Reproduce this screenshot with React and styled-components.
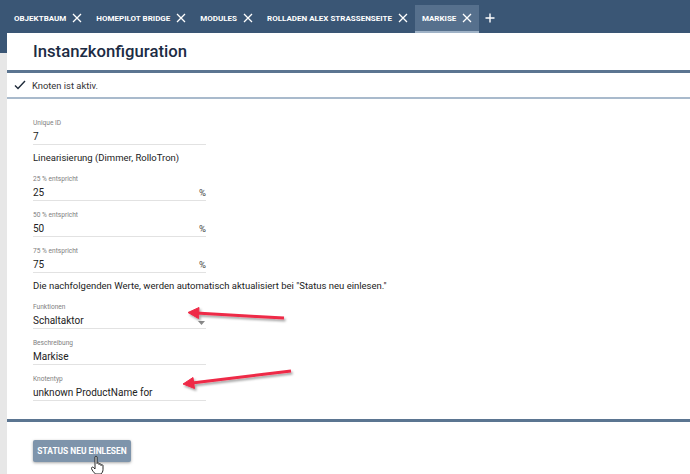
import React from 'react';
import styled, { createGlobalStyle } from 'styled-components';

const GlobalStyle = createGlobalStyle`
  html, body {
    margin: 0;
    padding: 0;
    background: #e7e7e7;
    font-family: Roboto, "Liberation Sans", Arial, sans-serif;
  }
  #root {
    position: relative;
    min-height: 474px;
  }
`;

const tabs = ['Objektbaum', 'Homepilot Bridge', 'Modules', 'Rolladen Alex Strassenseite', 'Markise'];

const CloseIcon = () => (
  <svg width="10" height="10" viewBox="0 0 10 10">
    <path d="M1 1 L9 9 M9 1 L1 9" stroke="#fff" strokeWidth="1.3" fill="none" />
  </svg>
);

const PlusIcon = () => (
  <svg width="10" height="10" viewBox="0 0 10 10">
    <path d="M5 0.5 V9.5 M0.5 5 H9.5" stroke="#fff" strokeWidth="1.4" fill="none" />
  </svg>
);

const CheckIcon = () => (
  <svg width="12" height="10" viewBox="0 0 12 10">
    <path d="M1 5.5 L4 8.5 L11 1" stroke="#1f2b3a" strokeWidth="1.4" fill="none" />
  </svg>
);

const Caret = () => (
  <svg width="7" height="4" viewBox="0 0 7 4">
    <path d="M0 0 H7 L3.5 4 Z" fill="#888" />
  </svg>
);

export default function App() {
  return (
    <>
      <GlobalStyle />
      <Header>
        <TabBar>
          {tabs.map((t, i) => (
            <Tab key={t} active={i === tabs.length - 1}>
              <span>{t}</span>
              <CloseIcon />
            </Tab>
          ))}
          <AddTab>
            <PlusIcon />
          </AddTab>
        </TabBar>
      </Header>
      <Panel>
        <Title>Instanzkonfiguration</Title>
        <Status>
          <CheckIcon />
          <span>Knoten ist aktiv.</span>
        </Status>
        <Form>
          <Field>
            <Label>Unique ID</Label>
            <Value>7</Value>
          </Field>
          <Heading>Linearisierung (Dimmer, RolloTron)</Heading>
          {['25', '50', '75'].map((v) => (
            <Field key={v}>
              <Label>{v} % entspricht</Label>
              <Value>
                <span>{v}</span>
                <Unit>%</Unit>
              </Value>
            </Field>
          ))}
          <Heading>Die nachfolgenden Werte, werden automatisch aktualisiert bei "Status neu einlesen."</Heading>
          <Field>
            <Label>Funktionen</Label>
            <Value>
              <span>Schaltaktor</span>
              <CaretBox>
                <Caret />
              </CaretBox>
            </Value>
          </Field>
          <Field>
            <Label>Beschreibung</Label>
            <Value>Markise</Value>
          </Field>
          <Field>
            <Label>Knotentyp</Label>
            <Value>unknown ProductName for</Value>
          </Field>
        </Form>
        <Footer>
          <Button>Status neu einlesen</Button>
        </Footer>
      </Panel>
      <Overlay width="690" height="474" viewBox="0 0 690 474">
        <defs>
          <filter id="sh" x="-20%" y="-200%" width="140%" height="500%">
            <feDropShadow dx="1.5" dy="2" stdDeviation="1.2" floodColor="#000" floodOpacity="0.35" />
          </filter>
        </defs>
        <g filter="url(#sh)" fill="#ee2a47" stroke="#ee2a47">
          <line x1="284" y1="318" x2="196" y2="313" strokeWidth="3" />
          <path d="M188 312.5 L199 307.5 L198.5 318.5 Z" strokeWidth="1" />
          <line x1="291" y1="371" x2="192" y2="383" strokeWidth="3" />
          <path d="M183 384 L193 377.5 L194.5 388.5 Z" strokeWidth="1" />
        </g>
        <g transform="translate(91 455.5)">
          <path
            d="M4 1.5 C4 0.5 6 0.5 6 1.5 V8 C6 7 8 7 8 8 V9 C8 8 10 8 10 9 V10 C10 9 12 9 12 10 V14 C12 16 11 17.5 10 18.5 H4.5 C3.5 17.5 1 15 0.5 13 C0 12 1.5 11 2.5 12 L4 13.5 Z"
            fill="#fff"
            stroke="#111"
            strokeWidth="0.9"
          />
        </g>
      </Overlay>
    </>
  );
}

const Header = styled.div`
  background: #3a5675;
  height: 53px;
`;

const TabBar = styled.div`
  display: flex;
  align-items: stretch;
  height: 33px;
  padding: 5px 0 0 7px;
  box-sizing: border-box;
`;

const Tab = styled.div`
  display: flex;
  align-items: center;
  gap: 6px;
  padding: 0 7px;
  color: #fff;
  font-size: 8px;
  font-weight: 700;
  text-transform: uppercase;
  background: ${(p) => (p.active ? '#56708d' : 'transparent')};
  border-bottom: 2px solid ${(p) => (p.active ? '#9fb2c6' : 'transparent')};
  svg {
    flex-shrink: 0;
  }
`;

const AddTab = styled.div`
  display: flex;
  align-items: center;
  padding: 0 6px;
  border-bottom: 2px solid transparent;
`;

const Panel = styled.div`
  background: #fff;
  margin: -20px 0 0 7px;
  min-height: 441px;
`;

const Title = styled.h1`
  margin: 0;
  padding: 9px 0 0 26px;
  height: 40px;
  box-sizing: border-box;
  font-size: 16.7px;
  line-height: 20px;
  font-weight: 500;
  color: #1c2c44;
  border-bottom: 3px solid #5b7591;
`;

const Status = styled.div`
  display: flex;
  align-items: center;
  gap: 6px;
  padding-left: 7px;
  height: 24px;
  font-size: 9.4px;
  color: #333;
  border-bottom: 2px solid #a9bacc;
`;

const Form = styled.div`
  padding: 20px 0 8px 26px;
  width: 173px;
  display: flex;
  flex-direction: column;
`;

const Field = styled.div`
  display: flex;
  flex-direction: column;
  border-bottom: 1px solid #e2e2e2;
  margin-bottom: 10px;
`;

const Label = styled.div`
  font-size: 6.6px;
  color: #808080;
  line-height: 9px;
`;

const Value = styled.div`
  display: flex;
  align-items: center;
  justify-content: space-between;
  font-size: 10px;
  color: #222;
  line-height: 13px;
  margin-top: 2px;
  padding-bottom: 1px;
  width: 173px;
  white-space: nowrap;
`;

const Unit = styled.span`
  font-size: 9.5px;
  color: #444;
`;

const CaretBox = styled.span`
  display: flex;
  padding: 5px 1px 0 0;
`;

const Heading = styled.div`
  font-size: 9.5px;
  color: #222;
  white-space: nowrap;
  line-height: 10px;
  margin: -2px 0 12px;
`;

const Footer = styled.div`
  border-top: 3px solid #5b7591;
  padding: 17px 0 0 26px;
`;

const Button = styled.button`
  background: #7e94ab;
  color: #fff;
  border: none;
  border-radius: 2px;
  height: 22px;
  width: 98px;
  padding: 0;
  font-family: Roboto, "Liberation Sans", Arial, sans-serif;
  font-size: 8.4px;
  font-weight: 700;
  text-transform: uppercase;
  white-space: nowrap;
  box-shadow: 0 1px 3px rgba(0, 0, 0, 0.35);
`;

const Overlay = styled.svg`
  position: absolute;
  left: 0;
  top: 0;
  pointer-events: none;
`;
